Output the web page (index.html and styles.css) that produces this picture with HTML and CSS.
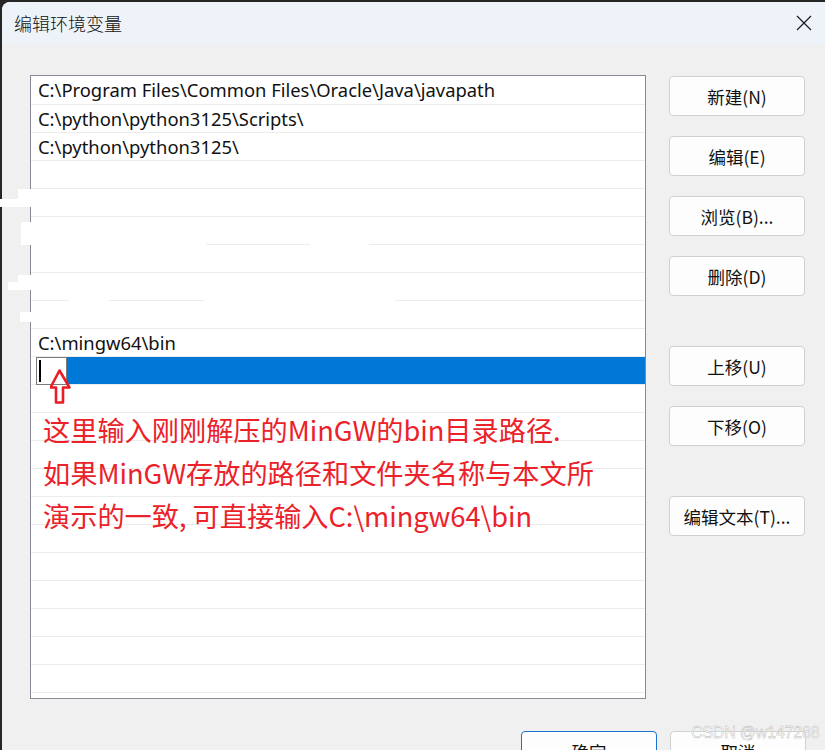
FILE: index.html
```html
<!DOCTYPE html>
<html lang="zh-CN">
<head>
<meta charset="utf-8">
<title>编辑环境变量</title>
<link rel="stylesheet" href="styles.css">
</head>
<body>
<div class="screen">
  <div class="window">
    <div class="titlebar">
      <span class="title">编辑环境变量</span>
      <svg class="close" width="16" height="16" viewBox="0 0 16 16"><path d="M1 1 L15 15 M15 1 L1 15" stroke="#1a1a1a" stroke-width="1.2" fill="none"/></svg>
    </div>
    <div class="content">
      <div class="main">
        <div class="list">
          <div class="row">C:\Program Files\Common Files\Oracle\Java\javapath</div>
          <div class="row">C:\python\python3125\Scripts\</div>
          <div class="row">C:\python\python3125\</div>
          <div class="row"></div>
          <div class="row"></div>
          <div class="row"></div>
          <div class="row"></div>
          <div class="row"></div>
          <div class="row"></div>
          <div class="row">C:\mingw64\bin</div>
          <div class="row selected"><span class="edit"><span class="caret"></span></span><span class="fill"></span></div>
          <div class="row"></div>
          <div class="row"></div>
          <div class="row"></div>
          <div class="row"></div>
          <div class="row"></div>
          <div class="row"></div>
          <div class="row"></div>
          <div class="row"></div>
          <div class="row"></div>
          <div class="row"></div>
          <div class="row"></div>
          <div class="row"></div>
          <svg class="arrow" width="24" height="38" viewBox="0 0 24 38"><polygon points="9.5,1.5 19.5,18.5 13,18.5 13,33.5 6,33.5 6,18.5 0.5,18.5" fill="none" stroke="#ec1c24" stroke-width="2.6" stroke-linejoin="round"/></svg>
          <div class="note">
            <div>这里输入刚刚解压的MinGW的bin目录路径.</div>
            <div>如果MinGW存放的路径和文件夹名称与本文所</div>
            <div>演示的一致, 可直接输入C:\mingw64\bin</div>
          </div>
        </div>
        <div class="side">
          <button class="btn">新建(N)</button>
          <button class="btn">编辑(E)</button>
          <button class="btn">浏览(B)...</button>
          <button class="btn">删除(D)</button>
          <button class="btn gap">上移(U)</button>
          <button class="btn">下移(O)</button>
          <button class="btn gap">编辑文本(T)...</button>
        </div>
      </div>
      <div class="footer">
        <button class="btn primary">确定</button>
        <button class="btn">取消</button>
      </div>
    </div>
  </div>
  <div class="mask m1"></div>
  <div class="mask m2"></div>
  <div class="mask m3"></div>
  <div class="mask m4"></div>
  <div class="mask m5"></div>
  <div class="mask m6"></div>
  <div class="mask m7"></div>
  <div class="mask m8"></div>
  <div class="mask m9"></div>
  <div class="mask m10"></div>
  <div class="watermark">CSDN @w147288</div>
</div>
</body>
</html>
```
FILE: styles.css
```css
* { box-sizing: border-box; }
html, body { margin: 0; padding: 0; }
body {
  background: #262626;
  font-family: "Noto Sans", "Noto Sans CJK SC", sans-serif;
  overflow: hidden;
}
.screen {
  position: relative;
  width: 825px;
  height: 750px;
  overflow: hidden;
  background: #262626;
}
.window {
  margin: 2px 0 0 2px;
  height: 748px;
  background: #f0f0f0;
  border-top-left-radius: 8px;
  overflow: hidden;
}
.titlebar {
  height: 42px;
  background: #eef3f9;
  display: flex;
  align-items: center;
  justify-content: space-between;
  padding: 0 13px 0 12px;
}
.title {
  font-family: "Noto Sans CJK SC", sans-serif;
  font-size: 18px;
  font-weight: 300;
  color: #111;
}
.close { display: block; }
.content {
  padding: 31px 0 0 28px;
}
.main {
  display: flex;
  gap: 23px;
  align-items: flex-start;
}
.list {
  position: relative;
  width: 616px;
  height: 624px;
  border: 1px solid #878a94;
  background: #fff;
  overflow: hidden;
}
.row {
  height: 28px;
  border-top: 1px solid #ececec;
  padding-left: 7px;
  font-size: 18.4px;
  line-height: 26px;
  color: #111;
  white-space: nowrap;
  display: flex;
  align-items: center;
}
.row:first-child { border-top: none; }
.row.selected {
  padding-left: 5px;
  align-items: stretch;
}
.edit {
  width: 31px;
  height: 28px;
  border: 1px solid #7a7a7a;
  background: #fff;
  position: relative;
  flex: none;
}
.caret {
  position: absolute;
  left: 2px;
  top: 2px;
  width: 1.5px;
  height: 22px;
  background: #000;
}
.fill {
  flex: 1;
  height: 27px;
  background: #0078d7;
}
.arrow {
  position: absolute;
  left: 19px;
  top: 293px;
}
.note {
  position: absolute;
  left: 12px;
  top: 332px;
  font-family: "Noto Sans CJK SC", sans-serif;
  font-size: 27.2px;
  line-height: 43px;
  color: #eb222a;
  white-space: nowrap;
}
.side {
  display: flex;
  flex-direction: column;
  gap: 20px;
  padding-top: 1px;
}
.btn {
  width: 136px;
  height: 40px;
  border: 1px solid #d0d0d0;
  border-radius: 4px;
  background: #fdfdfd;
  font-family: "Noto Sans CJK SC", sans-serif;
  font-size: 17.5px;
  color: #111;
  padding: 0;
  margin: 0;
}
.btn.gap { margin-top: 30px; }
.btn.primary { border-color: #1a73d0; }
.footer {
  display: flex;
  justify-content: flex-end;
  gap: 13px;
  margin-top: 32px;
  padding-right: 19px;
}
.mask {
  position: absolute;
  background: #fff;
}
.m1 { left: 0; top: 199px; width: 31px; height: 8px; }
.m2 { left: 18px; top: 189px; width: 132px; height: 10px; }
.m3 { left: 21px; top: 222px; width: 10px; height: 23px; }
.m4 { left: 18px; top: 275px; width: 13px; height: 7px; }
.m5 { left: 8px; top: 282px; width: 23px; height: 8px; }
.m6 { left: 20px; top: 312px; width: 11px; height: 10px; }
.m7 { left: 31px; top: 244px; width: 175px; height: 1px; }
.m8 { left: 310px; top: 244px; width: 59px; height: 1px; }
.m9 { left: 69px; top: 300px; width: 40px; height: 1px; }
.m10 { left: 204px; top: 300px; width: 191px; height: 1px; }
.watermark {
  position: absolute;
  left: 691px;
  top: 724px;
  font-family: "Liberation Sans", sans-serif;
  font-size: 16px;
  letter-spacing: -0.2px;
  color: rgba(255, 255, 255, 0.9);
  -webkit-text-stroke: 0.4px #b4b4b4;
  white-space: nowrap;
}
```
